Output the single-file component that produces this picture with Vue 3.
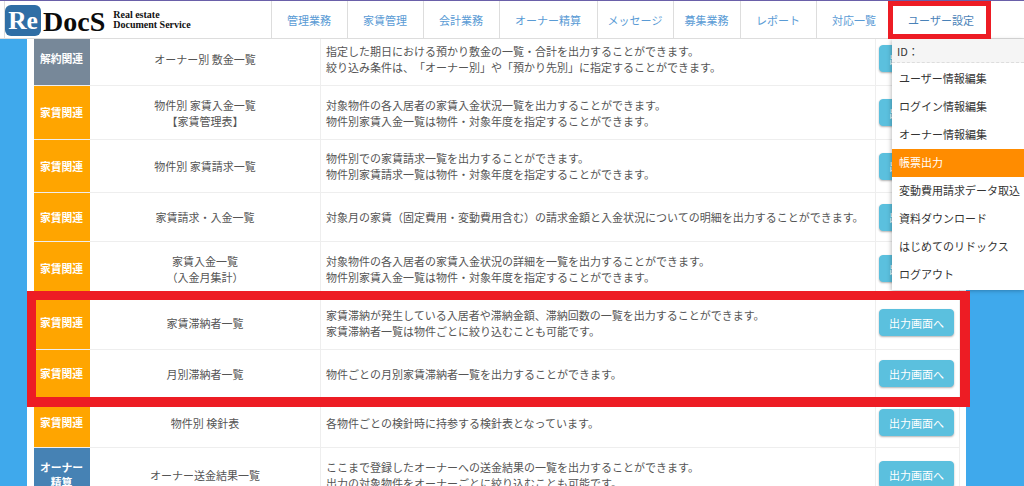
<script setup>
const nav = [
  { label: '管理業務', w: 76 },
  { label: '家賃管理', w: 76 },
  { label: '会計業務', w: 76 },
  { label: 'オーナー精算', w: 98 },
  { label: 'メッセージ', w: 76 },
  { label: '募集業務', w: 67 },
  { label: 'レポート', w: 76 },
  { label: '対応一覧', w: 76 },
  { label: 'ユーザー設定', w: 99 }
]
const rows = [
  { h: 54, cat: ['解約関連'], tone: 'gray', name: ['オーナー別 敷金一覧'], desc: ['指定した期日における預かり敷金の一覧・合計を出力することができます。', '絞り込み条件は、「オーナー別」や「預かり先別」に指定することができます。'] },
  { h: 54, cat: ['家賃関連'], tone: 'orange', name: ['物件別 家賃入金一覧', '【家賃管理表】'], desc: ['対象物件の各入居者の家賃入金状況一覧を出力することができます。', '物件別家賃入金一覧は物件・対象年度を指定することができます。'] },
  { h: 53, cat: ['家賃関連'], tone: 'orange', name: ['物件別 家賃請求一覧'], desc: ['物件別での家賃請求一覧を出力することができます。', '物件別家賃請求一覧は物件・対象年度を指定することができます。'] },
  { h: 49, cat: ['家賃関連'], tone: 'orange', name: ['家賃請求・入金一覧'], desc: ['対象月の家賃（固定費用・変動費用含む）の請求金額と入金状況についての明細を出力することができます。'] },
  { h: 54, cat: ['家賃関連'], tone: 'orange', name: ['家賃入金一覧', '（入金月集計）'], desc: ['対象物件の各入居者の家賃入金状況の詳細を一覧を出力することができます。', '物件別家賃入金一覧は物件・対象年度を指定することができます。'] },
  { h: 54, cat: ['家賃関連'], tone: 'orange', name: ['家賃滞納者一覧'], desc: ['家賃滞納が発生している入居者や滞納金額、滞納回数の一覧を出力することができます。', '家賃滞納者一覧は物件ごとに絞り込むことも可能です。'] },
  { h: 48, cat: ['家賃関連'], tone: 'orange', name: ['月別滞納者一覧'], desc: ['物件ごとの月別家賃滞納者一覧を出力することができます。'] },
  { h: 50, cat: ['家賃関連'], tone: 'orange', name: ['物件別 検針表'], desc: ['各物件ごとの検針時に持参する検針表となっています。'] },
  { h: 54, cat: ['オーナー', '精算'], tone: 'blue', name: ['オーナー送金結果一覧'], desc: ['ここまで登録したオーナーへの送金結果の一覧を出力することができます。', '出力の対象物件をオーナーごとに絞り込むことも可能です。'] }
]
const menu = ['ユーザー情報編集', 'ログイン情報編集', 'オーナー情報編集', '帳票出力', '変動費用請求データ取込', '資料ダウンロード', 'はじめてのリドックス', 'ログアウト']
</script>

<template>
  <div class="page">
    <main class="sheet">
      <div class="table">
        <div v-for="(r, i) in rows" :key="i" class="row" :style="{ height: r.h + 'px' }">
          <div class="cat" :class="r.tone">
            <span v-for="c in r.cat" :key="c">{{ c }}</span>
          </div>
          <div class="name">
            <span v-for="n in r.name" :key="n">{{ n }}</span>
          </div>
          <div class="desc">
            <span v-for="d in r.desc" :key="d">{{ d }}</span>
          </div>
          <div class="action"><button class="btn">出力画面へ</button></div>
        </div>
      </div>
    </main>

    <header class="header">
      <div class="brand">
        <span class="mark">Re</span>
        <span class="docs">DocS</span>
        <span class="tagline"><span>Real estate</span><span>Document Service</span></span>
      </div>
      <nav class="nav">
        <a v-for="n in nav" :key="n.label" class="nav-item" :style="{ width: n.w + 'px' }">{{ n.label }}</a>
      </nav>
    </header>

    <div class="dropdown">
      <div class="dd-id">ID：</div>
      <div v-for="m in menu" :key="m" class="dd-item" :class="{ active: m === '帳票出力' }">{{ m }}</div>
    </div>

    <div class="mark-nav"></div>
    <div class="mark-rows"></div>
  </div>
</template>

<style>
html, body { margin: 0; padding: 0; overflow: hidden; }
</style>

<style scoped>
.page {
  position: relative;
  width: 1024px;
  height: 486px;
  overflow: hidden;
  background: #3fa9ec;
  font-family: "Noto Sans CJK JP", "Noto Sans", sans-serif;
  color: #555;
  text-spacing-trim: space-all;
}
.sheet {
  width: 939px;
  margin-left: 27px;
  padding: 32px 6px 0 7px;
  box-sizing: border-box;
  background: #fff;
  height: 486px;
}
.table {
  border-right: 1px solid #eee;
}
.row {
  display: flex;
  box-sizing: border-box;
  border-bottom: 1px solid #eee;
}
.cat {
  width: 56px;
  flex: none;
  display: flex;
  flex-direction: column;
  align-items: center;
  justify-content: center;
  color: #fff;
  font-size: 10.8px;
  font-weight: 700;
  line-height: 15px;
  padding-right: 1px;
  box-sizing: border-box;
}
.gray { background: #778899; }
.orange { background: #ffa500; }
.blue { background: #4682b4; }
.name {
  width: 231px;
  flex: none;
  display: flex;
  flex-direction: column;
  align-items: center;
  justify-content: center;
  font-size: 11px;
  line-height: 16px;
  border-right: 1px solid #eee;
  box-sizing: border-box;
}
.desc {
  width: 555px;
  flex: none;
  box-sizing: border-box;
  padding-left: 5px;
  display: flex;
  flex-direction: column;
  justify-content: center;
  font-size: 11px;
  line-height: 16px;
  border-right: 1px solid #eee;
  white-space: nowrap;
}
.action {
  flex: 1;
  display: flex;
  align-items: center;
  padding-left: 3px;
}
.btn {
  width: 75px;
  height: 27px;
  padding: 0;
  border: 1px solid #5bc0de;
  border-radius: 4px;
  background: #5bc0de;
  color: #fff;
  font-family: inherit;
  font-size: 11px;
  box-shadow: 0 1px 2px rgba(0, 0, 0, 0.3);
}
.header {
  position: absolute;
  left: 0;
  top: 0;
  width: 1024px;
  height: 39px;
  box-sizing: border-box;
  display: flex;
  background: #fff;
  border-top: 1px solid #6a60a9;
  border-bottom: 1px solid #ddd;
}
.brand {
  width: 271px;
  flex: none;
  box-sizing: border-box;
  margin-left: 4px;
  display: flex;
  align-items: center;
  border-left: 1px solid #ddd;
  font-family: "Liberation Serif", serif;
  font-weight: 700;
  color: #111;
}
.mark {
  width: 36px;
  height: 31px;
  margin-top: 1px;
  border-radius: 6px;
  background: #2f6ea5;
  color: #fff;
  font-size: 25.5px;
  line-height: 31px;
  text-align: center;
  flex: none;
}
.docs {
  font-size: 28px;
  line-height: 31px;
  margin-left: 2px;
  margin-top: 3px;
  color: #0b0b0b;
}
.tagline {
  display: flex;
  flex-direction: column;
  margin-left: 8px;
  margin-top: 1px;
  font-size: 10px;
  line-height: 10px;
  white-space: nowrap;
}
.nav {
  display: flex;
  margin-left: -4px;
}
.nav-item {
  box-sizing: border-box;
  display: flex;
  align-items: center;
  justify-content: center;
  padding-right: 1px;
  border-left: 1px solid #ddd;
  font-size: 11px;
  color: #5a9bd5;
  white-space: nowrap;
}
.nav-item:last-child {
  color: #4a82b8;
  border-left: 0;
}
.dropdown {
  position: absolute;
  left: 892px;
  top: 39px;
  width: 132px;
  height: 251px;
  background: #fff;
  box-shadow: -1px 1px 4px rgba(0, 0, 0, 0.25);
  font-size: 11px;
  color: #333;
}
.dd-id {
  height: 24px;
  box-sizing: border-box;
  padding-left: 5px;
  background: #f5f5f5;
  border-bottom: 1px dashed #ddd;
  line-height: 24px;
  margin-bottom: 2px;
}
.dd-item {
  height: 28px;
  line-height: 26px;
  padding-left: 7px;
  white-space: nowrap;
}
.dd-item.active {
  background: #ff8c00;
  color: #fff;
}
.mark-nav {
  position: absolute;
  left: 888px;
  top: 1px;
  width: 103px;
  height: 38px;
  box-sizing: border-box;
  border: 5px solid #ed1c24;
}
.mark-rows {
  position: absolute;
  left: 27px;
  top: 291px;
  width: 943px;
  height: 116px;
  box-sizing: border-box;
  border: solid #ed1c24;
  border-width: 9px 10px 10px 9px;
}
</style>
